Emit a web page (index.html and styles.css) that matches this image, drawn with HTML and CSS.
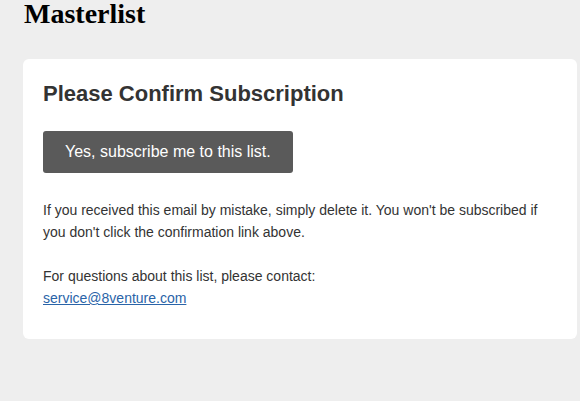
FILE: index.html
```html
<!DOCTYPE html>
<html>
<head>
    <title>Masterlist</title>
    <link rel="stylesheet" href="styles.css">
</head>
<body>
    <h1>Masterlist</h1>
    <div class="card">
        <h2>Please Confirm Subscription</h2>
        <a class="confirm" href="#">Yes, subscribe me to this list.</a>
        <p>If you received this email by mistake, simply delete it. You won't be subscribed if you don't click the confirmation link above.</p>
        <p>For questions about this list, please contact:<br><a href="mailto:service@8venture.com">service@8venture.com</a></p>
    </div>
</body>
</html>
```

FILE: styles.css
```css
body {
    margin: 0;
    padding: 0 3px 0 23px;
    background-color: #eeeeee;
    font-family: "Liberation Sans", Arial, sans-serif;
    color: #333;
}

h1 {
    font-family: "Liberation Serif", "Times New Roman", serif;
    font-size: 28px;
    line-height: 27px;
    margin: 0 0 32px 1px;
    color: #000;
}

.card {
    background-color: #fff;
    border-radius: 6px;
    padding: 20px 20px 30px;
}

h2 {
    font-size: 22px;
    line-height: 29px;
    margin: 0 0 23px;
}

.confirm {
    display: inline-block;
    background-color: #5a5a5a;
    color: #fff;
    text-decoration: none;
    font-size: 16px;
    line-height: 42px;
    padding: 0 22px;
    border-radius: 3px;
}

p {
    font-size: 14px;
    line-height: 22px;
    margin: 26px 0 0;
}

p + p {
    margin-top: 22px;
}

p a {
    color: #2a64a8;
}
```
